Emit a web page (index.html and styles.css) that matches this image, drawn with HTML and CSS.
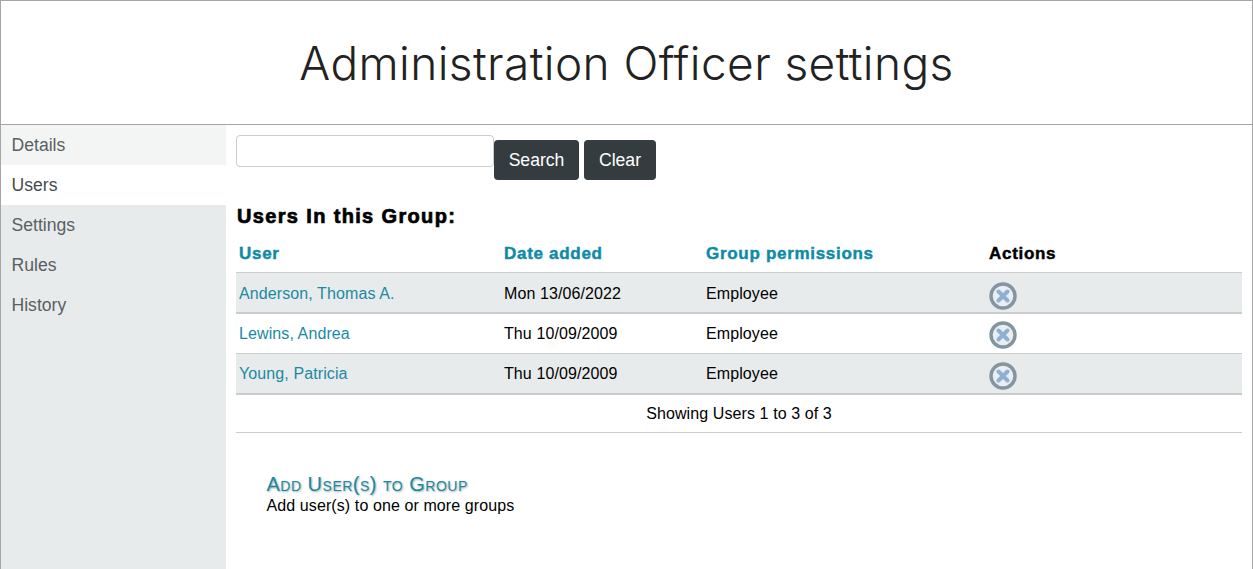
FILE: index.html
```html
<!DOCTYPE html>
<html lang="en">
<head>
<meta charset="utf-8">
<title>Administration Officer settings</title>
<link rel="stylesheet" href="styles.css">
</head>
<body>
<div class="page">
  <header class="banner"><h1>Administration Officer settings</h1></header>
  <div class="layout">
    <nav class="side">
      <a class="side-item first">Details</a>
      <a class="side-item active">Users</a>
      <a class="side-item">Settings</a>
      <a class="side-item">Rules</a>
      <a class="side-item">History</a>
    </nav>
    <main class="content">
      <form class="search">
        <input class="search-input" type="text">
        <button class="btn search-btn" type="button">Search</button>
        <button class="btn clear-btn" type="button">Clear</button>
      </form>
      <h2 class="group-title">Users In this Group:</h2>
      <table class="users">
        <thead>
          <tr>
            <th class="link-head">User</th>
            <th class="link-head">Date added</th>
            <th class="link-head">Group permissions</th>
            <th>Actions</th>
          </tr>
        </thead>
        <tbody>
          <tr class="odd">
            <td><a class="user-link">Anderson, Thomas A.</a></td>
            <td>Mon 13/06/2022</td>
            <td>Employee</td>
            <td class="action"><svg class="remove" viewBox="0 0 28 28"><circle cx="14" cy="14" r="12" fill="#e9eef2" stroke="#84959f" stroke-width="3.4"/><path d="M9.5 9.5l9 9M18.500 9.500l-9 9" stroke="#8fb0d3" stroke-width="4" stroke-linecap="round"/></svg></td>
          </tr>
          <tr>
            <td><a class="user-link">Lewins, Andrea</a></td>
            <td>Thu 10/09/2009</td>
            <td>Employee</td>
            <td class="action"><svg class="remove" viewBox="0 0 28 28"><circle cx="14" cy="14" r="12" fill="#e9eef2" stroke="#84959f" stroke-width="3.4"/><path d="M9.5 9.5l9 9M18.500 9.500l-9 9" stroke="#8fb0d3" stroke-width="4" stroke-linecap="round"/></svg></td>
          </tr>
          <tr class="odd">
            <td><a class="user-link">Young, Patricia</a></td>
            <td>Thu 10/09/2009</td>
            <td>Employee</td>
            <td class="action"><svg class="remove" viewBox="0 0 28 28"><circle cx="14" cy="14" r="12" fill="#e9eef2" stroke="#84959f" stroke-width="3.4"/><path d="M9.5 9.5l9 9M18.500 9.500l-9 9" stroke="#8fb0d3" stroke-width="4" stroke-linecap="round"/></svg></td>
          </tr>
        </tbody>
      </table>
      <p class="showing">Showing Users 1 to 3 of 3</p>
      <section class="add">
        <a class="add-title">Add User(s) to Group</a>
        <p class="add-text">Add user(s) to one or more groups</p>
      </section>
    </main>
  </div>
</div>
</body>
</html>
```
FILE: styles.css
```css
* { box-sizing: border-box; }
html, body { margin: 0; height: 100%; }
body { font-family: "Liberation Sans", Arial, sans-serif; font-size: 16px; color: #000; background: #fff; }
.page { height: 569px; overflow: hidden; border: 1px solid #a6a6a6; border-bottom: 0; display: flex; flex-direction: column; }
.banner { height: 124px; flex: none; border-bottom: 1px solid #a6a6a6; display: flex; align-items: center; justify-content: center; }
.banner h1 { margin: 0; font-family: Inter, sans-serif; font-weight: 300; font-size: 46px; letter-spacing: .4px; line-height: 1; color: #222; }
.layout { flex: 1; display: flex; min-height: 0; }
.side { width: 225px; flex: none; background: #e8ebeb; display: flex; flex-direction: column; }
.side-item { height: 40px; padding-left: 10.5px; line-height: 40px; font-size: 17.6px; color: #5a5f63; }
.side-item.first { background: #f3f5f5; }
.side-item.active { background: #fff; color: #474c50; }
.content { flex: 1; min-width: 0; padding: 10px 10px 0 10px; }
.search { display: flex; align-items: flex-start; height: 45px; }
.search-input { width: 258px; height: 32px; border: 1px solid #ccc; border-radius: 4px; background: #fff; padding: 0; }
.btn { height: 40px; margin-top: 5px; border: 0; border-radius: 4px; background: #343c3f; color: #fff; font-family: inherit; font-size: 17.6px; padding: 0; }
.search-btn { width: 85px; margin-right: 5px; }
.clear-btn { width: 72px; }
.group-title { margin: 25px 0 0 1px; font-size: 20px; line-height: 23px; font-weight: 700; letter-spacing: 1.35px; -webkit-text-stroke: .7px #000; }
.users { width: 100%; margin-top: 8px; border-collapse: separate; border-spacing: 0; table-layout: fixed; font-size: 16px; }
.users th { height: 37px; padding: 0 0 0 3px; text-align: left; font-size: 17px; letter-spacing: .7px; font-weight: 700; -webkit-text-stroke: .45px currentColor; border-bottom: 1px solid #ccc; }
.users th:nth-child(1) { width: 265px; }
.users th:nth-child(2) { width: 202px; }
.users th:nth-child(3) { width: 283px; }
.link-head { color: #0f8ba6; }
.users td { padding: 0 0 0 3px; letter-spacing: .1px; }
.users tbody tr:nth-child(1) td { height: 41px; padding-top: 2px; border-bottom: 2px solid #ccc; }
.users tbody tr:nth-child(2) td { height: 40px; border-bottom: 1px solid #ccc; }
.users tbody tr:nth-child(3) td { height: 41px; border-bottom: 2px solid #ccc; }
.users tr.odd td { background: #e8ebeb; }
.user-link { color: #1a8aa3; }
.users tbody td.action { line-height: 0; vertical-align: top; padding-top: 0; }
.remove { width: 28px; height: 28px; filter: blur(.4px); }
.users tbody tr:nth-child(1) .remove { margin-top: 7px; }
.users tbody tr:nth-child(2) .remove { margin-top: 7px; }
.users tbody tr:nth-child(3) .remove { margin-top: 8px; }
.showing { margin: 0; height: 38px; line-height: 37px; text-align: center; border-bottom: 1px solid #ccc; letter-spacing: .1px; }
.add { margin: 40px 0 0 30.5px; }
.add-title { display: block; font-size: 20px; line-height: 23px; letter-spacing: .5px; font-variant: small-caps; color: #1a8aa3; text-shadow: 1px 1px 2px #aaa; }
.add-text { margin: 0; line-height: 20px; letter-spacing: .1px; }
```
